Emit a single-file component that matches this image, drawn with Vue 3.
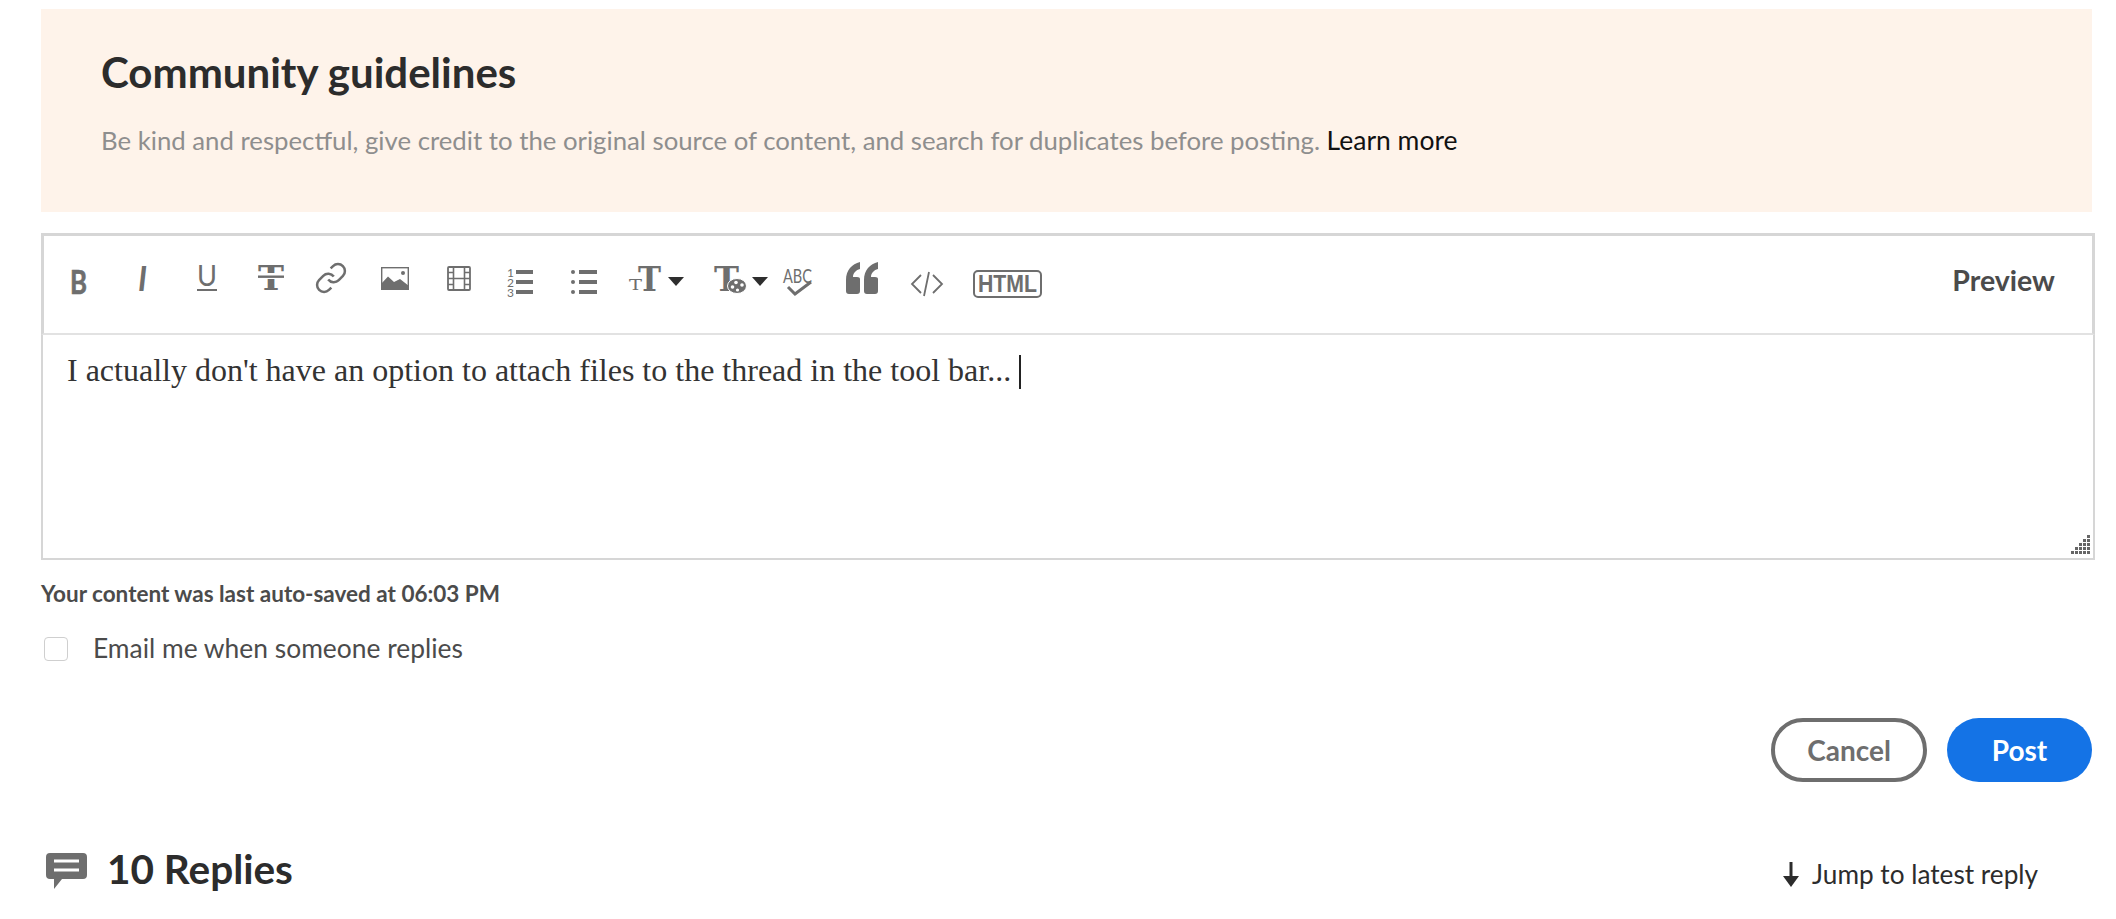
<script setup>
const note = "Be kind and respectful, give credit to the original source of content, and search for duplicates before posting."
const draft = "I actually don't have an option to attach files to the thread in the tool bar..."
</script>

<template>
  <main class="page">
    <section class="banner">
      <h2 class="banner-title">Community guidelines</h2>
      <p class="banner-text">{{ note }} <a class="banner-link">Learn more</a></p>
    </section>

    <section class="editor">
      <div class="toolbar">
        <div class="tools">
          <svg width="18" height="40" viewBox="0 0 18 40"><text x="0" y="34" class="gly sans-b heavy" font-size="33" textLength="17" lengthAdjust="spacingAndGlyphs">B</text></svg>
          <svg width="10" height="40" viewBox="0 0 10 40"><text x="0" y="31" class="gly sans-bi" font-size="34" textLength="9" lengthAdjust="spacingAndGlyphs">I</text></svg>
          <svg width="20" height="40" viewBox="0 0 20 40"><text x="0" y="26" class="gly sans" font-size="29" textLength="20" lengthAdjust="spacingAndGlyphs">U</text><rect y="29" width="20" height="2" class="fill" /></svg>
          <svg width="26" height="40" viewBox="0 0 26 40"><text x="0" y="30" class="gly slab-b" font-size="34" textLength="26" lengthAdjust="spacingAndGlyphs">T</text><rect y="13" width="26" height="6" fill="#fff" /><rect y="15.500" width="26" height="2.400" class="fill" /></svg>
          <svg width="28" height="40" viewBox="0 0 28 40"><g transform="translate(-2.800 1.200) scale(1.400)" class="line" stroke-width="1.800"><path d="M10 13a5 5 0 0 0 7.540.540l3-3a5 5 0 0 0-7.070-7.070l-1.720 1.710" /><path d="M14 11a5 5 0 0 0-7.540-.540l-3 3a5 5 0 0 0 7.070 7.070l1.710-1.710" /></g></svg>
          <svg width="28" height="40" viewBox="0 0 28 40"><rect x=".7" y="7.700" width="26.600" height="21" class="line" stroke-width="1.400" /><path d="M0 30V24L7 16.500L13 22L19 19L28 26V30Z" class="fill" /><circle cx="22" cy="13" r="2" class="fill" /></svg>
          <svg width="24" height="40" viewBox="0 0 24 40"><rect x="1" y="7" width="22" height="23" rx="1" class="line" stroke-width="1.800" /><path d="M6.500 7V30M17.500 7V30M6.500 18.500H17.500M1 12.500H6.500M1 18.500H6.500M1 24.500H6.500M17.500 12.500H23M17.500 18.500H23M17.500 24.500H23" class="line" stroke-width="1.600" /></svg>
          <svg width="26" height="40" viewBox="0 0 26 40"><text x="0 0 0" y="17 27 36.500" class="gly sans" font-size="12">123</text><path d="M9 10H26V14H9ZM9 20H26V24H9ZM9 30H26V34H9Z" class="fill" /></svg>
          <svg width="26" height="40" viewBox="0 0 26 40"><circle cx="2" cy="12" r="2" class="fill" /><circle cx="2" cy="22" r="2" class="fill" /><circle cx="2" cy="32" r="2" class="fill" /><path d="M8 10H26V14H8ZM8 20H26V24H8ZM8 30H26V34H8Z" class="fill" /></svg>
          <svg width="55" height="40" viewBox="0 0 55 40"><text x="0" y="30" class="gly slab" font-size="15" textLength="13" lengthAdjust="spacingAndGlyphs">T</text><text x="9" y="31" class="gly slab-b" font-size="34" textLength="23" lengthAdjust="spacingAndGlyphs">T</text><path d="M39 17H55L47 26Z" class="dark" /></svg>
          <svg width="54" height="40" viewBox="0 0 54 40"><text x="0" y="31" class="gly slab-b" font-size="34" textLength="25" lengthAdjust="spacingAndGlyphs">T</text><ellipse cx="23" cy="26" rx="9.500" ry="7.500" class="fill" stroke="#fff" stroke-width="1" /><circle cx="18.500" cy="27" r="1.800" fill="#fff" /><circle cx="22" cy="22.500" r="1.800" fill="#fff" /><circle cx="28" cy="25" r="1.800" fill="#fff" /><circle cx="23.500" cy="30" r="1.600" fill="#fff" /><path d="M38 17H54L46 26Z" class="dark" /></svg>
          <svg width="29" height="40" viewBox="0 0 29 40"><text x="0" y="23" class="gly sans" font-size="20" textLength="29" lengthAdjust="spacingAndGlyphs">ABC</text><path d="M5 27L12 34L28 22" class="line" stroke-width="3" /></svg>
          <svg width="32" height="40" viewBox="0 0 32 40"><path d="M14 2C6 4 0 10 0 20V31Q0 34 3 34H11Q14 34 14 31V19Q14 17 11 17H7C7 13 10 10 14 9ZM32 2C24 4 18 10 18 20V31Q18 34 21 34H29Q32 34 32 31V19Q32 17 29 17H25C25 13 28 10 32 9Z" class="fill" /></svg>
          <svg width="32" height="40" viewBox="0 0 32 40"><path d="M10 15L1 24L10 33M18 12L13 36M22 15L31 24L22 33" class="line" stroke-width="1.800" /></svg>
          <svg width="69" height="40" viewBox="0 0 69 40"><rect x="1" y="11" width="67" height="26" rx="4" class="line" stroke-width="2" /><text x="5" y="32" class="gly sans-arial" font-size="23" textLength="59" lengthAdjust="spacingAndGlyphs">HTML</text></svg>
        </div>
        <button class="preview" type="button">Preview</button>
      </div>
      <div class="body">
        <p class="draft">{{ draft }} <span class="caret"></span></p>
        <svg class="grip" width="20" height="20" viewBox="0 0 20 20"><path d="M16 0h3v3h-3zM12 4h3v3h-3zM16 4h3v3h-3zM8 8h3v3H8zM12 8h3v3h-3zM16 8h3v3h-3zM4 12h3v3H4zM8 12h3v3H8zM12 12h3v3h-3zM16 12h3v3h-3zM0 16h3v3H0zM4 16h3v3H4zM8 16h3v3H8zM12 16h3v3h-3zM16 16h3v3h-3z" fill="#666" /></svg>
      </div>
    </section>

    <p class="saved">Your content was last auto-saved at 06:03 PM</p>

    <label class="notify"><span class="box"></span><span>Email me when someone replies</span></label>

    <div class="actions">
      <button class="btn cancel" type="button">Cancel</button>
      <button class="btn post" type="button">Post</button>
    </div>

    <div class="replies">
      <div class="count">
        <svg class="bubble" width="42" height="38" viewBox="0 0 42 38"><path d="M4 0H37Q41 0 41 4V22Q41 26 37 26H16L8 36V26H4Q0 26 0 22V4Q0 0 4 0Z" fill="#6e6e6e" /><path d="M8 8H33M8 17H33" stroke="#fff" stroke-width="3" /></svg>
        <h3 class="count-text">10 Replies</h3>
      </div>
      <a class="jump">
        <svg width="18" height="26" viewBox="0 0 18 26"><path d="M9 1V20" stroke="#2c2c2c" stroke-width="3" /><path d="M1 15H17L9 26Z" fill="#2c2c2c" /></svg>
        <span>Jump to latest reply</span>
      </a>
    </div>
  </main>
</template>

<style>
html, body { background: #fff; }
</style>

<style scoped>
.page {
  box-sizing: border-box;
  width: 2116px;
  height: 919px;
  overflow: hidden;
  padding: 9px 21px 0 41px;
  font-family: Lato, "Open Sans", sans-serif;
  color: #2c2c2c;
}
.banner {
  box-sizing: border-box;
  width: 2051px;
  height: 203px;
  padding: 38px 60px 0;
  background: #fef3ea;
}
.banner-title {
  margin: 0;
  font-size: 42px;
  line-height: 50px;
  font-weight: 700;
}
.banner-text {
  margin: 26px 0 0;
  font-size: 25.750px;
  line-height: 34px;
  color: #8e8e8e;
}
.banner-link { color: #111; font-size: 26.500px; }
.editor {
  margin-top: 21px;
  width: 2054px;
}
.toolbar {
  box-sizing: border-box;
  height: 102px;
  display: flex;
  align-items: flex-start;
  justify-content: space-between;
  padding-top: 24px;
  border: 3px solid #d6d6d6;
  border-bottom: 2px solid #e2e2e2;
}
.tools {
  display: grid;
  grid-template-columns: 65px 64px 64px 64px 56px 72px 56px 66px 62px 83px 86px 27px 102px 28px 133px;
  justify-items: center;
  margin-left: 2px;
}
.tools svg { display: block; overflow: visible; }
.gly { fill: #6e6e6e; }
.heavy { stroke: #6e6e6e; stroke-width: .6px; }
.sans { font-family: Lato, sans-serif; }
.sans-b { font-family: Lato, sans-serif; font-weight: 700; }
.sans-bi { font-family: Lato, sans-serif; font-weight: 700; font-style: italic; }
.sans-arial { font-family: "Liberation Sans", sans-serif; font-weight: 700; }
.slab { font-family: "DejaVu Serif", serif; }
.slab-b { font-family: "DejaVu Serif", serif; font-weight: 700; }
.fill { fill: #6e6e6e; }
.dark { fill: #2e2e2e; }
.line { fill: none; stroke: #6e6e6e; }
.preview {
  margin: 0 37px 0 0;
  padding: 0;
  border: 0;
  background: none;
  font: 700 28.500px/40px Lato, sans-serif;
  color: #4b4b4b;
}
.body {
  position: relative;
  box-sizing: border-box;
  height: 225px;
  padding: 15px 24px;
  border: 2px solid #d6d6d6;
  border-top: 0;
}
.draft {
  margin: 0;
  font: 32px/40px "Liberation Serif", "Times New Roman", serif;
  color: #333;
}
.caret {
  display: inline-block;
  width: 2px;
  height: 34px;
  vertical-align: -8px;
  background: #222;
}
.grip { position: absolute; right: 2px; bottom: 3px; }
.saved {
  margin: 19px 0 0;
  font-size: 22.500px;
  line-height: 30px;
  font-weight: 700;
  color: #4b4b4b;
}
.notify {
  display: flex;
  align-items: center;
  margin-top: 22px;
  padding-left: 3px;
  font-size: 26.400px;
  line-height: 34px;
  color: #4b4b4b;
}
.box {
  box-sizing: border-box;
  width: 24px;
  height: 24px;
  margin: 2px 25px 0 0;
  border: 1px solid #cfcfcf;
  border-radius: 4px;
}
.actions {
  display: flex;
  justify-content: flex-end;
  gap: 20px;
  width: 2051px;
  margin-top: 53px;
}
.btn {
  box-sizing: border-box;
  height: 64px;
  border-radius: 32px;
  font: 700 28px/1 Lato, sans-serif;
}
.cancel { width: 156px; border: 4px solid #6e6e6e; background: #fff; color: #6e6e6e; }
.post { width: 145px; border: 0; background: #1473e6; color: #fff; }
.replies {
  display: flex;
  justify-content: space-between;
  align-items: center;
  width: 2051px;
  margin-top: 62px;
}
.count { display: flex; align-items: center; gap: 19px; padding-left: 5px; }
.bubble { margin-top: 5px; }
.count-text {
  margin: 0;
  font-size: 40.500px;
  line-height: 50px;
  font-weight: 700;
}
.jump {
  display: flex;
  align-items: center;
  gap: 12px;
  margin: 10px 54px 0 0;
  font-size: 26.200px;
  line-height: 34px;
}
</style>
